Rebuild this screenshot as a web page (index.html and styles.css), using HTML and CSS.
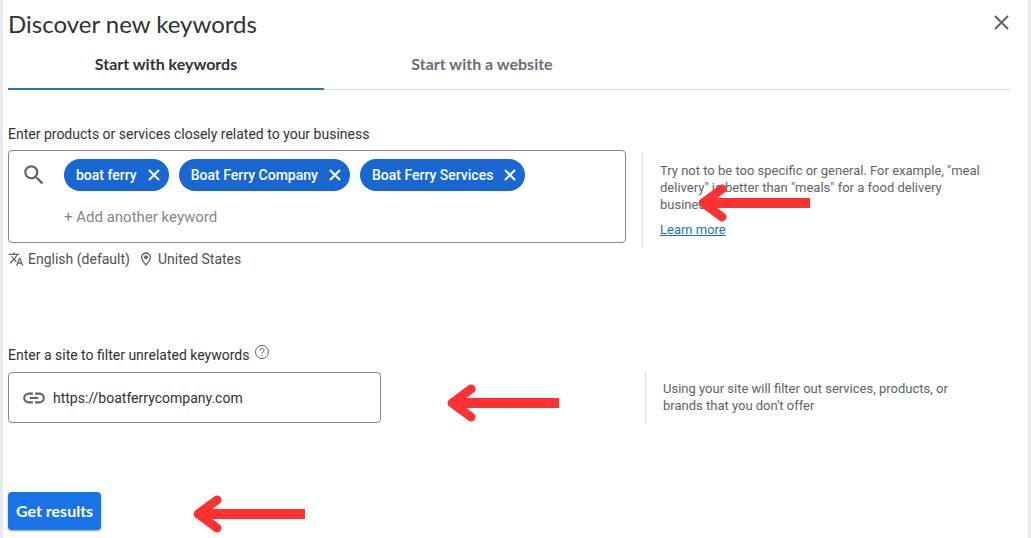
FILE: index.html
```
<!DOCTYPE html>
<html lang="en">
	<head>
		<meta charset="utf-8">
		<title>Discover new keywords</title>
		<link rel="stylesheet" href="styles.css">
	</head>
	<body>
		<main class="panel">
			<header class="panel-header">
				<h1>Discover new keywords</h1>
				<button type="button" class="icon-button" aria-label="Close">
					<svg width="18" height="20" viewBox="0 0 18 20"><path d="M3 2l13 13M16 2L3 15"/></svg>
				</button>
			</header>

			<nav class="tabs">
				<button type="button" class="tab active">Start with keywords</button>
				<button type="button" class="tab">Start with a website</button>
			</nav>

			<form>
				<section class="row keywords">
					<div class="field">
						<label for="keyword">Enter products or services closely related to your business</label>
						<div class="keyword-box">
							<svg class="search" width="24" height="24" viewBox="0 0 24 24"><path d="M15.500 14h-.79l-.28-.27A6.470 6.470 0 0 0 16 9.500 6.500 6.500 0 1 0 9.500 16c1.610 0 3.090-.59 4.230-1.570l.27.28v.79l5 4.990L20.490 19l-4.990-5zm-6 0C7.010 14 5 11.990 5 9.500S7.010 5 9.500 5 14 7.010 14 9.500 11.990 14 9.500 14z"/></svg>
							<div class="chips">
								<span class="chip">boat ferry
									<button type="button" aria-label="Remove boat ferry"><svg width="14" height="14" viewBox="0 0 14 14"><path d="M2 2l10 10M12 2L2 12"/></svg></button>
								</span>
								<span class="chip">Boat Ferry Company
									<button type="button" aria-label="Remove Boat Ferry Company"><svg width="14" height="14" viewBox="0 0 14 14"><path d="M2 2l10 10M12 2L2 12"/></svg></button>
								</span>
								<span class="chip">Boat Ferry Services
									<button type="button" aria-label="Remove Boat Ferry Services"><svg width="14" height="14" viewBox="0 0 14 14"><path d="M2 2l10 10M12 2L2 12"/></svg></button>
								</span>
								<input type="text" id="keyword" placeholder="+ Add another keyword">
							</div>
						</div>
						<div class="targeting">
							<svg width="16" height="16" viewBox="0 0 24 24"><path d="M12.870 15.070l-2.540-2.510.03-.03A17.520 17.520 0 0 0 14.070 6H17V4h-7V2H8v2H1v2h11.170C11.500 7.920 10.440 9.750 9 11.350 8.070 10.320 7.300 9.190 6.690 8h-2c.73 1.630 1.730 3.170 2.980 4.560l-5.090 5.020L4 19l5-5 3.110 3.110.76-2.040zM18.500 10h-2L12 22h2l1.120-3h4.750L21 22h2l-4.500-12zm-2.620 7l1.620-4.330L19.120 17h-3.240z"/></svg>
							<span>English (default)</span>
							<svg width="16" height="16" viewBox="0 0 24 24"><path d="M12 2C8 2 4.500 5.100 4.500 9.500c0 3.500 2.500 7.500 7.500 13 5-5.500 7.500-9.500 7.500-13C19.500 5.100 16 2 12 2zm0 17.500c-3.700-4.200-5.500-7.500-5.500-10C6.500 6.300 9 4 12 4s5.500 2.300 5.500 5.500c0 2.500-1.800 5.800-5.500 10z"/><circle cx="12" cy="9.500" r="3"/></svg>
							<span>United States</span>
						</div>
					</div>
					<aside class="hint">
						<p>Try not to be too specific or general. For example, "meal delivery" is better than "meals" for a food delivery business</p>
						<a href="#">Learn more</a>
						<svg class="arrow" width="114" height="40" viewBox="0 0 114 40"><path d="M113 20H8"/><path class="head" d="M25 6L6 20l19 14"/></svg>
					</aside>
				</section>

				<section class="row site">
					<div class="field">
						<div class="label-line">
							<label for="site">Enter a site to filter unrelated keywords</label>
							<svg width="16" height="16" viewBox="0 0 16 16"><circle cx="8" cy="7" r="6.500"/><path d="M6 5.500a2 2 0 1 1 3 1.600c-.7.400-1 .8-1 1.500M8 10v1.300"/></svg>
						</div>
						<div class="site-box">
							<svg width="26" height="26" viewBox="0 0 24 24"><path d="M3.900 12c0-1.710 1.390-3.100 3.100-3.100h4V7H7a5 5 0 0 0 0 10h4v-1.900H7c-1.710 0-3.100-1.390-3.100-3.100zM8 13h8v-2H8v2zm9-6h-4v1.900h4a3.100 3.100 0 0 1 0 6.200h-4V17h4a5 5 0 0 0 0-10z"/></svg>
							<input type="text" id="site" value="https://boatferrycompany.com">
						</div>
						<svg class="arrow" width="114" height="40" viewBox="0 0 114 40"><path d="M113 20H8"/><path class="head" d="M25 6L6 20l19 14"/></svg>
					</div>
					<aside class="hint">
						<p>Using your site will filter out services, products, or brands that you don't offer</p>
					</aside>
				</section>

				<div class="actions">
					<button type="submit" class="submit">Get results</button>
					<svg class="arrow" width="114" height="40" viewBox="0 0 114 40"><path d="M113 20H8"/><path class="head" d="M25 6L6 20l19 14"/></svg>
				</div>
			</form>
		</main>
	</body>
</html>
```
FILE: styles.css
```
* {
	box-sizing: border-box;
}
body {
	margin: 0;
	background: #fff;
	color: #303134;
	font: 14px/20px Roboto, sans-serif;
}
button, input {
	font: inherit;
	color: inherit;
	border: 0;
	padding: 0;
	background: none;
}
input:focus {
	outline: none;
}
svg {
	display: block;
	flex: none;
	fill: #5f6368;
}
h1, p {
	margin: 0;
}
.panel {
	min-height: 100vh;
	padding: 8px 18px 8px 5px;
	border: solid #e8eaf0;
	border-width: 0 3px;
}
.panel-header {
	display: flex;
	align-items: center;
	justify-content: space-between;
	height: 32px;
}
h1 {
	font: 24px/32px Lato, sans-serif;
}
.icon-button svg {
	stroke: #5f6368;
	stroke-width: 2;
}
.tabs {
	display: flex;
	height: 50px;
	border-bottom: 1px solid #dadce0;
}
.tab {
	width: 316px;
	height: 50px;
	border-bottom: 2px solid transparent;
	color: #6b6c73;
	font: bold 16px/20px Lato, sans-serif;
}
.tab.active {
	color: #303134;
	border-color: #2a73b4;
}
.row {
	display: grid;
	grid-template-columns: minmax(0, 1fr) 368px;
	gap: 16px;
}
.keywords {
	padding-top: 34px;
}
.field {
	position: relative;
}
.keyword-box {
	display: flex;
	gap: 17px;
	margin-top: 6px;
	padding: 8px 12px;
	height: 93px;
	border: 1px solid #85868a;
	border-radius: 4px;
}
.search {
	width: 26px;
	height: 26px;
	margin-top: 3px;
}
.chips {
	display: flex;
	flex-wrap: wrap;
	align-content: flex-start;
	gap: 10px;
	flex: 1;
}
.chip {
	display: flex;
	align-items: center;
	gap: 10px;
	height: 32px;
	padding: 0 8px 0 12px;
	border-radius: 16px;
	background: #1967d2;
	color: #fff;
	font-weight: 500;
}
.chip svg {
	stroke: #fff;
	stroke-width: 2;
}
.chips input {
	flex: 1 0 100%;
	height: 32px;
	font-size: 15px;
}
.chips input::placeholder {
	color: #85868a;
	opacity: 1;
}
.targeting {
	display: flex;
	align-items: center;
	gap: 4px;
	margin-top: 6px;
	color: #505155;
}
.targeting span + svg {
	margin-left: 4px;
}
.hint {
	position: relative;
	align-self: start;
	padding: 8px 16px 8px 17px;
	border-left: 1px solid #dadce0;
	color: #5f6368;
	font-size: 13px;
	line-height: 17px;
}
.hint a {
	display: inline-block;
	margin-top: 8px;
	color: #1a73b8;
}
.keywords .hint {
	margin-top: 30px;
}
.site {
	grid-template-columns: minmax(0, 1fr) 365px;
	padding-top: 76px;
}
.site .hint {
	margin-top: 27px;
	padding-right: 40px;
}
.label-line {
	display: flex;
	gap: 5px;
}
.label-line svg {
	fill: none;
	stroke: #5f6368;
}
.site-box {
	display: flex;
	align-items: center;
	gap: 6px;
	width: 60%;
	height: 51px;
	margin-top: 7px;
	padding: 0 12px;
	border: 1px solid #85868a;
	border-radius: 4px;
}
.site-box input {
	flex: 1;
	min-width: 0;
}
.actions {
	position: relative;
	padding-top: 69px;
}
.submit {
	height: 38px;
	padding: 0 8px;
	border-radius: 4px;
	background: #1a73e8;
	box-shadow: 0 1px 2px #9aa0a6;
	color: #fff;
	font: bold 16px/20px Lato, sans-serif;
}

/* red pointers drawn over the form */
.arrow {
	position: absolute;
	fill: none;
	stroke: #ff3131;
	stroke-width: 10;
	stroke-linejoin: round;
}
.arrow .head {
	stroke-width: 9;
	stroke-linecap: round;
}
.hint .arrow {
	left: 54px;
	top: 29px;
}
.site .field .arrow {
	left: 438px;
	top: 38px;
}
.actions .arrow {
	left: 184px;
	bottom: -4px;
}
```
